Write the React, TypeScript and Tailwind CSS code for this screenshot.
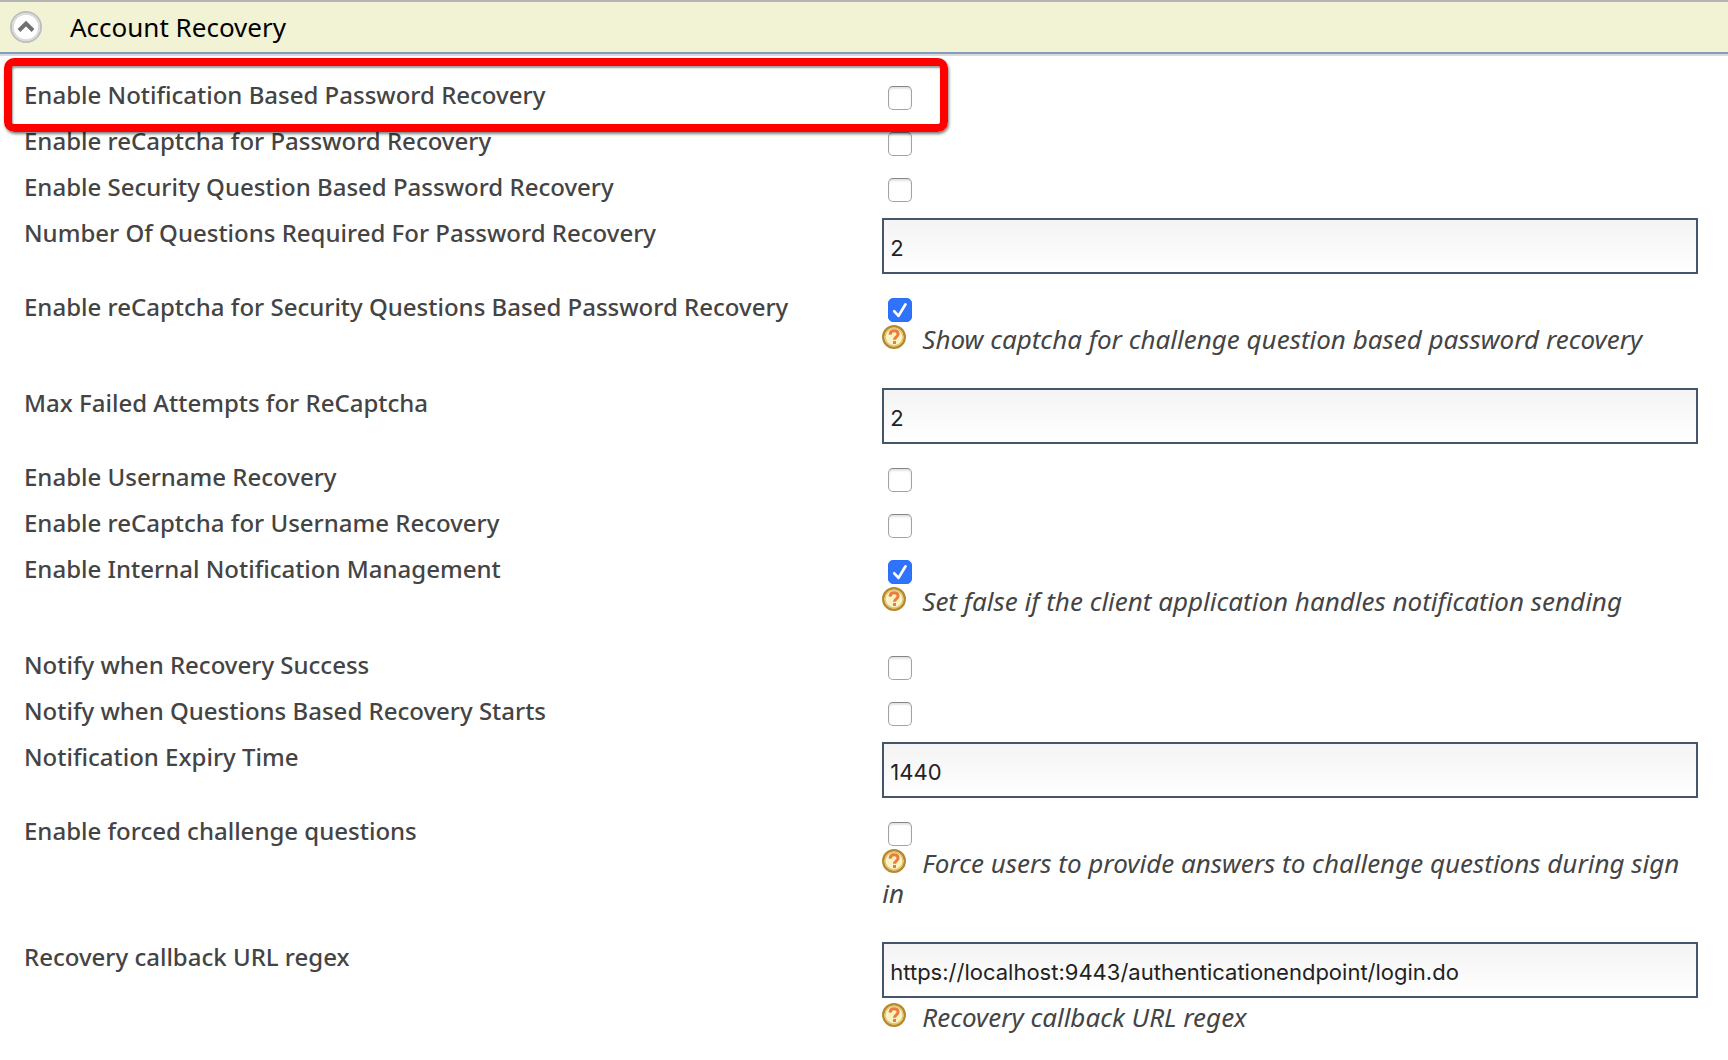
import { useId } from "react";

type Setting = {
  label: string;
  kind: "checkbox" | "text";
  checked?: boolean;
  value?: string;
  hint?: string;
  highlighted?: boolean;
};

const settings: Setting[] = [
  { label: "Enable Notification Based Password Recovery", kind: "checkbox", highlighted: true },
  { label: "Enable reCaptcha for Password Recovery", kind: "checkbox" },
  { label: "Enable Security Question Based Password Recovery", kind: "checkbox" },
  { label: "Number Of Questions Required For Password Recovery", kind: "text", value: "2" },
  {
    label: "Enable reCaptcha for Security Questions Based Password Recovery",
    kind: "checkbox",
    checked: true,
    hint: "Show captcha for challenge question based password recovery",
  },
  { label: "Max Failed Attempts for ReCaptcha", kind: "text", value: "2" },
  { label: "Enable Username Recovery", kind: "checkbox" },
  { label: "Enable reCaptcha for Username Recovery", kind: "checkbox" },
  {
    label: "Enable Internal Notification Management",
    kind: "checkbox",
    checked: true,
    hint: "Set false if the client application handles notification sending",
  },
  { label: "Notify when Recovery Success", kind: "checkbox" },
  { label: "Notify when Questions Based Recovery Starts", kind: "checkbox" },
  { label: "Notification Expiry Time", kind: "text", value: "1440" },
  {
    label: "Enable forced challenge questions",
    kind: "checkbox",
    hint: "Force users to provide answers to challenge questions during sign in",
  },
  {
    label: "Recovery callback URL regex",
    kind: "text",
    value: "https://localhost:9443/authenticationendpoint/login.do",
    hint: "Recovery callback URL regex",
  },
];

function HelpIcon() {
  return (
    <svg viewBox="0 0 24 24" className="mr-4 inline-block size-6 align-baseline" aria-hidden="true">
      <circle cx="12" cy="12" r="10.8" fill="#fbf3c4" stroke="#b58a2e" strokeWidth="2.4" />
      <circle cx="12" cy="12" r="9" fill="none" stroke="#dfc379" strokeWidth="1.4" />
      <path
        d="M8.1 9.6C8.2 7 9.8 5.8 12.1 5.8c2.4 0 4 1.2 4 3.2 0 2.7-3.6 2.9-3.6 5.8"
        fill="none"
        stroke="#ea7d3c"
        strokeWidth="3"
      />
      <rect x="11" y="16" width="3" height="3" fill="#ea7d3c" />
    </svg>
  );
}

function CheckBox({ id, checked }: { id: string; checked?: boolean }) {
  return (
    <span className="relative mt-[5px] ml-1.5 block size-6">
      <input
        id={id}
        type="checkbox"
        defaultChecked={checked}
        className="peer block size-6 appearance-none rounded-[5px] border border-[#a3a3a3] border-t-[#858585] bg-white shadow-[inset_0_2px_2px_#e4e4e4] checked:border-[#2b6ff8] checked:bg-[#2f72fb] checked:shadow-none"
      />
      <svg
        viewBox="0 0 24 24"
        className="pointer-events-none absolute inset-0 hidden size-6 peer-checked:block"
        aria-hidden="true"
      >
        <path
          d="M6.3 13.3l4.2 4.6 7-11.6"
          fill="none"
          stroke="#fff"
          strokeWidth="2.7"
          strokeLinecap="round"
          strokeLinejoin="round"
        />
      </svg>
    </span>
  );
}

function SettingRow({ setting }: { setting: Setting }) {
  const id = useId();
  const isText = setting.kind === "text";
  return (
    <div className="relative grid grid-cols-[51%_1fr] pt-2">
      <div className="pl-6 leading-7">
        <label htmlFor={id}>{setting.label}</label>
      </div>
      <div className={isText ? "-mt-px pr-[30px] pb-[11px] pl-px" : "pr-[30px] pb-2 pl-px"}>
        {isText ? (
          <input
            id={id}
            type="text"
            defaultValue={setting.value}
            className="block h-14 w-full border-2 border-[#45566b] bg-linear-to-b from-[#f4f4f5] to-white px-1.5 pt-1 font-['Inter',sans-serif] text-[22px] font-normal text-[#222]"
          />
        ) : (
          <CheckBox id={id} checked={setting.checked} />
        )}
        {setting.hint ? (
          <p
            className={
              isText
                ? "mt-1 pb-2 text-[26px] leading-[30px] font-normal italic"
                : "mt-0.5 pb-[19px] text-[26px] leading-[30px] font-normal italic"
            }
          >
            <HelpIcon />
            {setting.hint}
          </p>
        ) : (
          !isText && <div className="h-px" />
        )}
      </div>
      {setting.highlighted && (
        <div className="pointer-events-none absolute -top-[15px] left-1 z-10 h-[74px] w-[calc(51%+63px)] rounded-[10px] border-8 border-[#fe0000] shadow-[1px_2px_3px_rgba(0,0,0,0.5),inset_1px_2px_2px_rgba(0,0,0,0.4)]" />
      )}
    </div>
  );
}

export default function App() {
  return (
    <main className="min-h-screen bg-white font-['Noto_Sans',sans-serif] text-[24px] font-medium text-[#444]">
      <header className="border-b-2 border-[#d9dade]">
        <div className="flex h-[54px] items-center border-t-2 border-b-2 border-t-[#b5b5b5] border-b-[#859bbf] bg-[#f2f2d5] pl-2.5">
          <button type="button" aria-label="Collapse Account Recovery" className="mr-7 size-8">
            <svg viewBox="0 0 32 32" className="size-8" aria-hidden="true">
              <circle cx="16" cy="16" r="15" fill="#fff" stroke="#bdbdbd" strokeWidth="2" />
              <circle cx="16" cy="16" r="13.2" fill="none" stroke="#dadada" strokeWidth="2" />
              <path d="M9 19.5l7-7 7 7" fill="none" stroke="#707070" strokeWidth="4" />
            </svg>
          </button>
          <h2 className="text-[26px] leading-[30px] font-normal text-black">Account Recovery</h2>
        </div>
      </header>
      <form className="pt-[17px]">
        {settings.map((setting) => (
          <SettingRow key={setting.label} setting={setting} />
        ))}
      </form>
    </main>
  );
}
